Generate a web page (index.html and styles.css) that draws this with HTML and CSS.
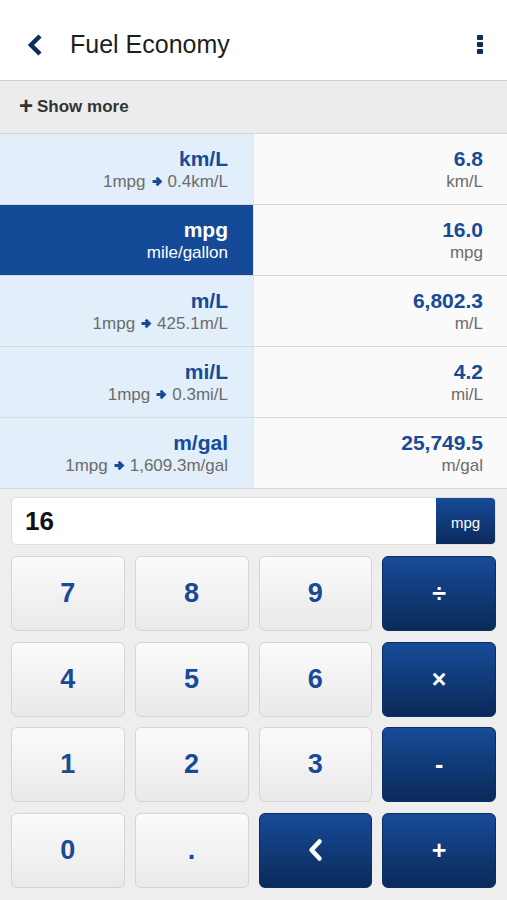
FILE: index.html
```html
<!DOCTYPE html>
<html lang="en">
<head>
    <meta charset="UTF-8">
    <meta name="viewport" content="width=device-width, initial-scale=1.0">
    <title>Fuel Economy</title>
    <link rel="stylesheet" href="styles.css">
</head>
<body>
    <div class="header">
        <svg class="back" width="18" height="24" viewBox="0 0 18 24">
            <path d="M14 3 L5 12 L14 21" fill="none" stroke="#0d2d5a" stroke-width="4.5" stroke-linejoin="miter"/>
        </svg>
        <h1>Fuel Economy</h1>
        <div class="kebab"><span></span><span></span><span></span></div>
    </div>

    <div class="show-more"><span class="plus">+</span>Show more</div>

    <div class="units">
        <div class="row">
            <div class="name"><b>km/L</b><small>1mpg <svg class="arr" viewBox="0 0 10 10"><path d="M0.5 5 H7.5 M4.2 1.5 L7.7 5 L4.2 8.5"/></svg> 0.4km/L</small></div>
            <div class="val"><b>6.8</b><small>km/L</small></div>
        </div>
        <div class="row active">
            <div class="name"><b>mpg</b><small>mile/gallon</small></div>
            <div class="val"><b>16.0</b><small>mpg</small></div>
        </div>
        <div class="row">
            <div class="name"><b>m/L</b><small>1mpg <svg class="arr" viewBox="0 0 10 10"><path d="M0.5 5 H7.5 M4.2 1.5 L7.7 5 L4.2 8.5"/></svg> 425.1m/L</small></div>
            <div class="val"><b>6,802.3</b><small>m/L</small></div>
        </div>
        <div class="row">
            <div class="name"><b>mi/L</b><small>1mpg <svg class="arr" viewBox="0 0 10 10"><path d="M0.5 5 H7.5 M4.2 1.5 L7.7 5 L4.2 8.5"/></svg> 0.3mi/L</small></div>
            <div class="val"><b>4.2</b><small>mi/L</small></div>
        </div>
        <div class="row">
            <div class="name"><b>m/gal</b><small>1mpg <svg class="arr" viewBox="0 0 10 10"><path d="M0.5 5 H7.5 M4.2 1.5 L7.7 5 L4.2 8.5"/></svg> 1,609.3m/gal</small></div>
            <div class="val"><b>25,749.5</b><small>m/gal</small></div>
        </div>
    </div>

    <div class="keypad">
        <div class="entry">
            <span class="num">16</span>
            <span class="unit">mpg</span>
        </div>
        <div class="keys">
            <button class="key">7</button>
            <button class="key">8</button>
            <button class="key">9</button>
            <button class="key op">÷</button>
            <button class="key">4</button>
            <button class="key">5</button>
            <button class="key">6</button>
            <button class="key op">×</button>
            <button class="key">1</button>
            <button class="key">2</button>
            <button class="key">3</button>
            <button class="key op">-</button>
            <button class="key">0</button>
            <button class="key">.</button>
            <button class="key op">
                <svg width="16" height="24" viewBox="0 0 16 24">
                    <path d="M12.5 3.5 L4.5 12 L12.5 20.5" fill="none" stroke="#fff" stroke-width="4.5" stroke-linecap="round" stroke-linejoin="round"/>
                </svg>
            </button>
            <button class="key op">+</button>
        </div>
    </div>
</body>
</html>
```

FILE: styles.css
```css
body {
    font-family: "Liberation Sans", Arial, sans-serif;
    margin: 0;
    background-color: #eeeeee;
    width: 507px;
    height: 900px;
    overflow: hidden;
}
.header {
    height: 81px;
    box-sizing: border-box;
    padding: 9px 0 0 26px;
    background-color: #ffffff;
    border-bottom: 1px solid #cfcfcf;
    display: flex;
    align-items: center;
}
.header h1 {
    font-size: 25px;
    font-weight: normal;
    color: #1e1e1e;
    margin: 0 0 0 26px;
    flex: 1;
}
.kebab {
    display: flex;
    flex-direction: column;
    gap: 2px;
    margin-right: 24px;
}
.kebab span {
    width: 6px;
    height: 5px;
    background-color: #0d2d5a;
    border-radius: 1px;
}
.show-more {
    height: 53px;
    box-sizing: border-box;
    background-color: #ececec;
    border-bottom: 1px solid #d6d6d6;
    display: flex;
    align-items: center;
    padding-left: 19px;
    font-size: 17px;
    font-weight: bold;
    color: #333333;
}
.plus {
    font-size: 24px;
    margin-right: 4px;
    line-height: 1;
    position: relative;
    top: -1px;
}
.units {
    background-color: #fafafa;
}
.row {
    display: flex;
    height: 71px;
    box-sizing: border-box;
    border-bottom: 1px solid #d8d8d8;
}
.name, .val {
    display: flex;
    flex-direction: column;
    justify-content: center;
    align-items: flex-end;
    padding-right: 25px;
    box-sizing: border-box;
}
.name {
    width: 254px;
    background-color: #e2effb;
    border-right: 1px solid #e6e6e6;
}
.val {
    flex: 1;
    padding-right: 24px;
}
.name b, .val b {
    font-size: 21px;
    color: #174a97;
    line-height: 25px;
}
.name small, .val small {
    font-size: 17px;
    color: #6c6c6c;
    line-height: 21px;
    display: flex;
    align-items: center;
}
.active .name {
    background-color: #154a98;
}
.active .name b, .active .name small {
    color: #ffffff;
}
.arr {
    width: 11px;
    height: 11px;
    margin: 0 5px 0 6px;
    fill: none;
    stroke: #174a97;
    stroke-width: 2.6;
}
.keypad {
    padding: 8px 11px 0 11px;
}
.entry {
    height: 48px;
    background-color: #ffffff;
    border: 1px solid #dddddd;
    border-radius: 5px;
    display: flex;
    align-items: center;
    box-sizing: border-box;
    overflow: hidden;
}
.num {
    flex: 1;
    padding-left: 13px;
    font-size: 26px;
    font-weight: bold;
    color: #111111;
}
.unit {
    width: 59px;
    height: 100%;
    background: linear-gradient(#174a97, #0b2b5c);
    color: #ffffff;
    font-size: 15px;
    display: flex;
    align-items: center;
    justify-content: center;
    padding-top: 3px;
    box-sizing: border-box;
}
.keys {
    display: grid;
    grid-template-columns: repeat(4, 1fr);
    grid-auto-rows: 75px;
    column-gap: 10px;
    row-gap: 10.5px;
    margin-top: 11px;
}
.key {
    font-family: "Liberation Sans", Arial, sans-serif;
    border: 1px solid #d4d4d4;
    border-radius: 6px;
    background: linear-gradient(#fbfbfb, #e9e9e9);
    color: #174a97;
    font-size: 27px;
    font-weight: bold;
    padding: 0;
    display: flex;
    align-items: center;
    justify-content: center;
}
.key.op {
    background: linear-gradient(#174b98, #0a2a59);
    border-color: #0c2e60;
    color: #ffffff;
    font-size: 25px;
}
```
